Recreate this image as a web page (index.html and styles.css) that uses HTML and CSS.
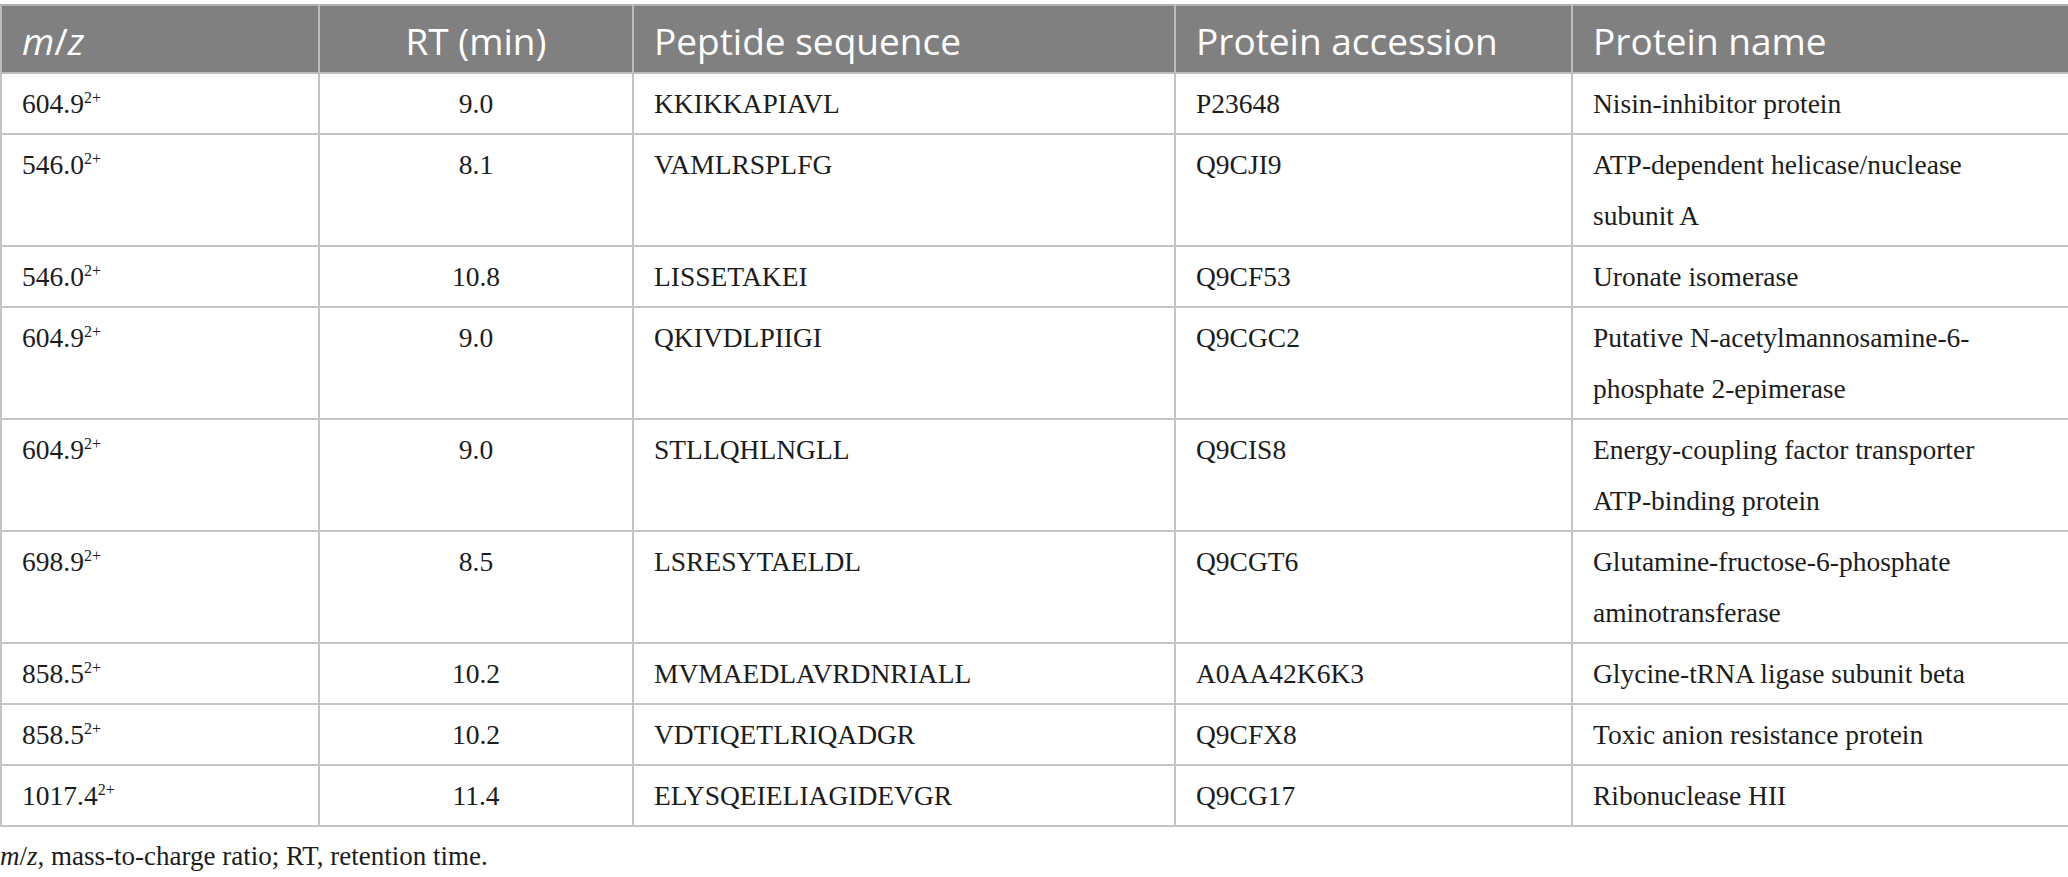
FILE: index.html
```html
<!DOCTYPE html>
<html>
<head>
<meta charset="utf-8">
<link rel="stylesheet" href="styles.css">
</head>
<body>
<div class="wrap">
<table class="tbl">
  <colgroup>
    <col class="c1"><col class="c2"><col class="c3"><col class="c4"><col class="c5">
  </colgroup>
  <thead>
    <tr>
      <th><i>m</i>/<i>z</i></th>
      <th class="center">RT (min)</th>
      <th>Peptide sequence</th>
      <th>Protein accession</th>
      <th>Protein name</th>
    </tr>
  </thead>
  <tbody>
    <tr><td>604.9<sup>2+</sup></td><td class="center">9.0</td><td>KKIKKAPIAVL</td><td>P23648</td><td>Nisin-inhibitor protein</td></tr>
    <tr><td>546.0<sup>2+</sup></td><td class="center">8.1</td><td>VAMLRSPLFG</td><td>Q9CJI9</td><td>ATP-dependent helicase/nuclease<br>subunit A</td></tr>
    <tr><td>546.0<sup>2+</sup></td><td class="center">10.8</td><td>LISSETAKEI</td><td>Q9CF53</td><td>Uronate isomerase</td></tr>
    <tr><td>604.9<sup>2+</sup></td><td class="center">9.0</td><td>QKIVDLPIIGI</td><td>Q9CGC2</td><td>Putative N-acetylmannosamine-6-<br>phosphate 2-epimerase</td></tr>
    <tr><td>604.9<sup>2+</sup></td><td class="center">9.0</td><td>STLLQHLNGLL</td><td>Q9CIS8</td><td>Energy-coupling factor transporter<br>ATP-binding protein</td></tr>
    <tr><td>698.9<sup>2+</sup></td><td class="center">8.5</td><td>LSRESYTAELDL</td><td>Q9CGT6</td><td>Glutamine-fructose-6-phosphate<br>aminotransferase</td></tr>
    <tr><td>858.5<sup>2+</sup></td><td class="center">10.2</td><td>MVMAEDLAVRDNRIALL</td><td>A0AA42K6K3</td><td>Glycine-tRNA ligase subunit beta</td></tr>
    <tr><td>858.5<sup>2+</sup></td><td class="center">10.2</td><td>VDTIQETLRIQADGR</td><td>Q9CFX8</td><td>Toxic anion resistance protein</td></tr>
    <tr><td>1017.4<sup>2+</sup></td><td class="center">11.4</td><td>ELYSQEIELIAGIDEVGR</td><td>Q9CG17</td><td>Ribonuclease HII</td></tr>
  </tbody>
</table>
<p class="note"><i>m</i>/<i>z</i>, mass-to-charge ratio; RT, retention time.</p>
</div>
</body>
</html>
```

FILE: styles.css
```css
html, body {
  margin: 0;
  padding: 0;
  background: #ffffff;
}
.wrap {
  padding-top: 4px;
  width: 2068px;
}
.tbl {
  width: 2068px;
  border-collapse: collapse;
  table-layout: fixed;
  font-family: "Liberation Serif", "Times New Roman", serif;
  font-size: 27.5px;
  color: #1c1c1c;
}
.c1 { width: 318px; }
.c2 { width: 314px; }
.c3 { width: 542px; }
.c4 { width: 397px; }
.c5 { width: 497px; }
.tbl th {
  background: #808080;
  color: #ffffff;
  font-family: "Open Sans", "Noto Sans", sans-serif;
  font-weight: 400;
  font-size: 37px;
  text-align: left;
  padding: 2px 20px 0;
  height: 64px;
  border: 2px solid #bdbdbd;
  border-top-color: #b0b0b0;
}
.tbl td {
  padding: 4px 20px 4px;
  line-height: 51px;
  vertical-align: top;
  border: 2px solid #c4c4c4;
}
.tbl .center {
  text-align: center;
}
.tbl sup {
  font-size: 16px;
  line-height: 0;
  vertical-align: 10px;
}
.note {
  margin: 14px 0 0 0;
  font-family: "Liberation Serif", "Times New Roman", serif;
  font-size: 27px;
  color: #1c1c1c;
}
```
